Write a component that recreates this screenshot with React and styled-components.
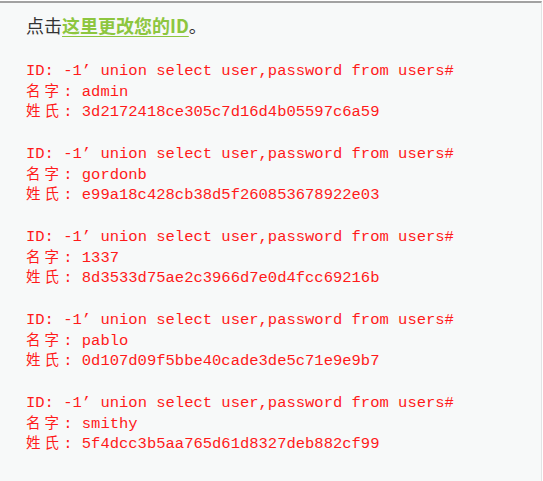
import React from "react";
import styled, { createGlobalStyle } from "styled-components";

const GlobalStyle = createGlobalStyle`
  html, body {
    margin: 0;
    padding: 0;
    background: #ffffff;
  }
`;

const Page = styled.div`
  box-sizing: border-box;
  width: 542px;
  height: 480px;
  margin-top: 1px;
  padding: 10px 0 0 26px;
  background: #f7f9f9;
  border-top: 2px solid #a2a2a2;
  border-right: 1px solid #e2e4e4;
`;

const Intro = styled.p`
  margin: 0 0 24px;
  font-family: "Noto Sans CJK SC", "Noto Sans", sans-serif;
  font-size: 18px;
  line-height: 24px;
  color: #333333;
`;

const ChangeLink = styled.a`
  color: #8dc63f;
  font-weight: bold;
  text-decoration: underline;
  text-underline-offset: 3px;
  cursor: pointer;
`;

const Result = styled.pre`
  margin: 0 0 21.5px;
  font-family: "Liberation Mono", "Noto Sans CJK SC", monospace;
  font-size: 15.5px;
  line-height: 20.5px;
  color: #ff1a1a;
  white-space: pre;
`;

const Line = styled.div`
  display: flex;
  align-items: baseline;
  height: 20.5px;
  white-space: pre;
`;

const Label = styled.span`
  font-family: "Noto Sans CJK SC", sans-serif;
  font-size: 14.5px;
  line-height: 1;
  letter-spacing: 4.1px;
`;

const rows = [
  { first: "admin", last: "3d2172418ce305c7d16d4b05597c6a59" },
  { first: "gordonb", last: "e99a18c428cb38d5f260853678922e03" },
  { first: "1337", last: "8d3533d75ae2c3966d7e0d4fcc69216b" },
  { first: "pablo", last: "0d107d09f5bbe40cade3de5c71e9e9b7" },
  { first: "smithy", last: "5f4dcc3b5aa765d61d8327deb882cf99" },
];

export default function App() {
  return (
    <>
      <GlobalStyle />
      <Page>
        <Intro>
          点击<ChangeLink>这里更改您的ID</ChangeLink>。
        </Intro>
        {rows.map((r) => (
          <Result key={r.first}>
            <Line>ID: -1{"\u2019"} union select user,password from users#</Line>
            <Line>
              <Label>名字</Label>
              <span>: {r.first}</span>
            </Line>
            <Line>
              <Label>姓氏</Label>
              <span>: {r.last}</span>
            </Line>
          </Result>
        ))}
      </Page>
    </>
  );
}
